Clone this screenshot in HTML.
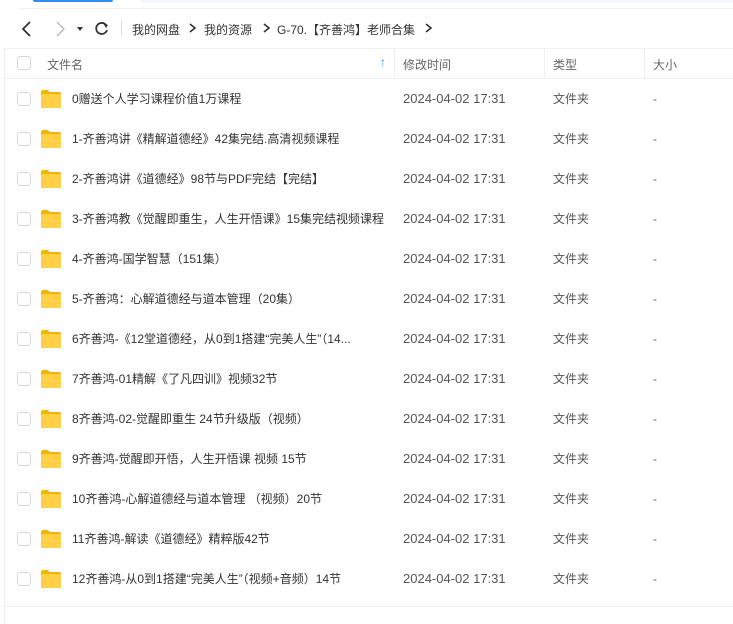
<!DOCTYPE html><html><head><meta charset="utf-8"><style>
body{margin:0;width:733px;height:624px;background:#fff;font-family:"Liberation Sans","Noto Sans CJK SC",sans-serif;font-size:12px;color:#424e67;position:relative;overflow:hidden}
.a{position:absolute}
.cb{position:absolute;left:17px;width:12px;height:12px;border:1px solid #d4d7de;border-radius:3px;background:#fff}
.row{position:absolute;left:5px;right:0;height:40px}
.fold{position:absolute;left:36px;top:11px;width:20px;height:18px}
.t{position:absolute;top:13px;line-height:14px;white-space:nowrap;color:#333}
.d{font-size:13px;top:13px}
.bc{position:absolute;top:21px;font-size:12px;color:#333;white-space:nowrap}
.gt{position:absolute;top:23px}
</style></head><body>
<div class="a" style="left:33px;top:0;width:80px;height:2px;background:#2f8cf6;border-radius:0 0 6px 6px"></div>
<div class="a" style="left:140px;top:0;width:593px;height:3px;background:#f3f8fd"></div>
<div class="a" style="left:20px;top:8px;width:713px;height:1px;background:#eef0f3"></div>
<div class="a" style="left:4px;top:48px;width:1px;height:576px;background:#eef0f3"></div>
<svg class="a" style="left:20px;top:20px" width="100" height="18"><path d="M10 2 L3 9 L10 16" stroke="#333" stroke-width="1.8" fill="none"/><path d="M37 2 L44 9 L37 16" stroke="#bbb" stroke-width="1.5" fill="none"/><path d="M57 7 L63 7 L60 11Z" fill="#333"/><path d="M86 5 A5.5 5.5 0 1 0 87 10" stroke="#333" stroke-width="1.8" fill="none"/><path d="M83 3 L88 5 L86 8" fill="#333"/></svg>
<div class="a" style="left:121px;top:19px;width:1px;height:18px;background:#e0e0e0"></div>
<div class="bc" style="left:132px">我的网盘</div>
<svg class="gt" style="left:189px" width="8" height="10"><path d="M1 1 L6 5 L1 9" stroke="#333" stroke-width="1.6" fill="none"/></svg>
<div class="bc" style="left:204px">我的资源</div>
<svg class="gt" style="left:263px" width="8" height="10"><path d="M1 1 L6 5 L1 9" stroke="#333" stroke-width="1.6" fill="none"/></svg>
<div class="bc" style="left:277px">G-70.【齐善鸿】老师合集</div>
<svg class="gt" style="left:425px" width="8" height="10"><path d="M1 1 L6 5 L1 9" stroke="#333" stroke-width="1.6" fill="none"/></svg>
<div class="a" style="left:5px;top:48px;width:728px;height:1px;background:#eef0f3"></div>
<div class="a" style="left:5px;top:78px;width:728px;height:1px;background:#eef0f3"></div>
<div class="a" style="left:394px;top:49px;width:1px;height:29px;background:#eef0f3"></div>
<div class="a" style="left:544px;top:49px;width:1px;height:29px;background:#eef0f3"></div>
<div class="a" style="left:644px;top:49px;width:1px;height:29px;background:#eef0f3"></div>
<div class="cb" style="top:56px"></div>
<div class="a" style="left:47px;top:56px;color:#666">文件名</div>
<div class="a" style="left:380px;top:55px;color:#2f8cf6;font-weight:bold">↑</div>
<div class="a" style="left:403px;top:56px;color:#666">修改时间</div>
<div class="a" style="left:553px;top:56px;color:#666">类型</div>
<div class="a" style="left:653px;top:56px;color:#666">大小</div>
<div class="a" style="left:5px;top:606px;width:728px;height:1px;background:#eef0f3"></div>
<div id="rows"></div>
<script>
var n=["0赠送个人学习课程价值1万课程","1-齐善鸿讲《精解道德经》42集完结.高清视频课程","2-齐善鸿讲《道德经》98节与PDF完结【完结】","3-齐善鸿教《觉醒即重生，人生开悟课》15集完结视频课程","4-齐善鸿-国学智慧（151集）","5-齐善鸿：心解道德经与道本管理（20集）","6齐善鸿-《12堂道德经，从0到1搭建“完美人生”（14...","7齐善鸿-01精解《了凡四训》视频32节","8齐善鸿-02-觉醒即重生 24节升级版（视频）","9齐善鸿-觉醒即开悟，人生开悟课  视频 15节","10齐善鸿-心解道德经与道本管理 （视频）20节","11齐善鸿-解读《道德经》精粹版42节","12齐善鸿-从0到1搭建“完美人生”（视频+音频）14节"];
var h="";n.forEach(function(s,i){var y=79+i*40;h+='<div class="row" style="top:'+y+'px"><div class="cb" style="left:12px;top:13px"></div><svg class="fold" viewBox="0 0 20 18"><path d="M0 2 Q0 0 2 0 H7 L9 2 H18 Q20 2 20 4 V16 Q20 18 18 18 H2 Q0 18 0 16Z" fill="#f5b400"/><path d="M0 5 Q0 4 1.5 4 H18.5 Q20 4 20 5 V16 Q20 18 18 18 H2 Q0 18 0 16Z" fill="#ffd046"/></svg><div class="t" style="left:67px">'+s+'</div><div class="t d" style="left:398px;color:#555">2024-04-02 17:31</div><div class="t" style="left:548px;color:#555">文件夹</div><div class="t" style="left:648px;color:#555">-</div></div>'});
document.getElementById("rows").innerHTML=h;
</script>
</body></html>
